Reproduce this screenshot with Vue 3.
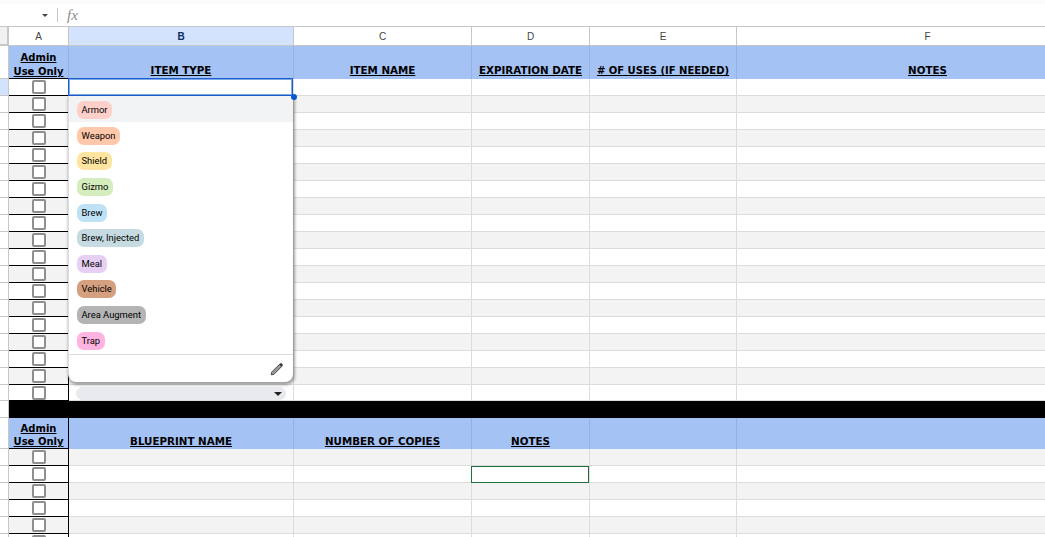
<script setup>
const topRows = Array.from({ length: 19 }, (_, i) => i)
const bottomRows = Array.from({ length: 6 }, (_, i) => i)
const letters = ['A', 'B', 'C', 'D', 'E', 'F']
const heads1 = ['ITEM TYPE', 'ITEM NAME', 'EXPIRATION DATE', '# OF USES (IF NEEDED)', 'NOTES']
const heads2 = ['BLUEPRINT NAME', 'NUMBER OF COPIES', 'NOTES', '', '']
const options = [
  { label: 'Armor', bg: '#ffcfc9' },
  { label: 'Weapon', bg: '#ffc8aa' },
  { label: 'Shield', bg: '#ffe5a0' },
  { label: 'Gizmo', bg: '#d4edbc' },
  { label: 'Brew', bg: '#bfe1f6' },
  { label: 'Brew, Injected', bg: '#c6dbe1' },
  { label: 'Meal', bg: '#e6cff2' },
  { label: 'Vehicle', bg: '#d4a07f' },
  { label: 'Area Augment', bg: '#b4b4b4' },
  { label: 'Trap', bg: '#ffb3e0' }
]
</script>

<template>
  <div class="app">
    <div class="topstrip"></div>
    <div class="formula">
      <span class="caret"></span>
      <span class="divider"></span>
      <span class="fx">fx</span>
    </div>
    <div class="sheet">
      <div class="grid colheads">
        <div class="corner"></div>
        <div
          v-for="l in letters"
          :key="l"
          class="colhead"
          :class="{ active: l === 'B' }"
        >{{ l }}</div>
      </div>

      <div class="grid head tall">
        <div class="rh"></div>
        <div class="hc admin"><span>Admin<br />Use Only</span></div>
        <div
          v-for="h in heads1"
          :key="h"
          class="hc"
          :class="{ tight: h.startsWith('#') }"
        ><span>{{ h }}</span></div>
      </div>

      <div
        v-for="r in topRows"
        :key="'t' + r"
        class="grid row"
        :class="{ alt: r % 2 === 1, last: r === 18 }"
      >
        <div class="rh" :class="{ on: r === 0 }"></div>
        <div class="c cbx"><span class="box"></span></div>
        <div class="c b">
          <span v-if="r === 0" class="sel blue"></span>
          <span v-if="r === 18" class="chip-empty"><i class="caret dark"></i></span>
        </div>
        <div class="c"></div>
        <div class="c"></div>
        <div class="c"></div>
        <div class="c"></div>
      </div>

      <div class="grid black">
        <div class="rh"></div>
        <div class="blackfill"></div>
      </div>

      <div class="grid head short">
        <div class="rh"></div>
        <div class="hc admin divided"><span>Admin<br />Use Only</span></div>
        <div v-for="(h, i) in heads2" :key="i" class="hc"><span>{{ h }}</span></div>
      </div>

      <div
        v-for="r in bottomRows"
        :key="'b' + r"
        class="grid row"
        :class="{ alt: r % 2 === 0 }"
      >
        <div class="rh"></div>
        <div class="c cbx"><span class="box"></span></div>
        <div class="c"></div>
        <div class="c"></div>
        <div class="c"><span v-if="r === 1" class="sel green"></span></div>
        <div class="c"></div>
        <div class="c"></div>
      </div>

      <span class="handle"></span>

      <div class="menu">
        <div class="list">
          <div
            v-for="(o, i) in options"
            :key="o.label"
            class="opt"
            :class="{ hover: i === 0 }"
          >
            <span class="pill" :style="{ background: o.bg }">{{ o.label }}</span>
          </div>
        </div>
        <div class="foot">
          <svg width="14" height="14" viewBox="0 0 14 14" class="pen">
            <path d="M1.6 10.2 L9.6 2.2 L11.8 4.4 L3.8 12.4 L1.2 12.8 Z" fill="#9a9a9a" stroke="#3c3c3c" stroke-width=".9" stroke-linejoin="round" />
            <path d="M9.2 2.6 L11.4 4.8 L12.7 3.5 C13 3.2 13 2.8 12.7 2.5 L11.5 1.3 C11.2 1 10.8 1 10.5 1.3 Z" fill="#3c3c3c" />
          </svg>
        </div>
      </div>
    </div>
  </div>
</template>

<style>
html, body { margin: 0; background: #fff; overflow: hidden; }
</style>

<style scoped>
.app {
  width: 1045px;
  height: 537px;
  overflow: hidden;
  background: #fff;
  font-family: "Liberation Sans", Arial, sans-serif;
}
.topstrip { height: 4px; background: #f9fbfd; }
.formula {
  height: 22px;
  display: flex;
  align-items: center;
  border-bottom: 1px solid #c7c7c7;
}
.caret {
  width: 0;
  height: 0;
  border-left: 3px solid transparent;
  border-right: 3px solid transparent;
  border-top: 3px solid #444;
  margin-left: 42px;
}
.divider { width: 1px; height: 14px; background: #c7c7c7; margin-left: 9px; }
.fx {
  font-family: "Liberation Serif", serif;
  font-style: italic;
  font-size: 15px;
  color: #8c8c8c;
  margin-left: 9px;
}
.sheet { position: relative; }
.grid {
  display: grid;
  grid-template-columns: 9px 60px 225px 178px 118px 147px 382px;
}
.colheads { height: 19px; }
.corner {
  background: #f1f1f1;
  border-right: 2px solid #c7c7c7;
  border-bottom: 2px solid #c7c7c7;
  box-sizing: border-box;
}
.colhead {
  box-sizing: border-box;
  border-right: 1px solid #c7c7c7;
  border-bottom: 1px solid #c7c7c7;
  display: flex;
  align-items: center;
  justify-content: center;
  font-size: 10px;
  color: #444;
}
.colhead.active { background: #d3e3fd; color: #0b2e66; font-weight: 700; }
.rh {
  box-sizing: border-box;
  border-right: 1px solid #c7c7c7;
  border-bottom: 1px solid #c7c7c7;
  background: #fff;
}
.rh.on { background: #d3e3fd; }
.head { background: #a4c2f4; }
.tall { height: 33px; }
.short { height: 31px; }
.hc {
  box-sizing: border-box;
  border-right: 1px solid #95b2e3;
  display: flex;
  align-items: flex-end;
  justify-content: center;
  text-align: center;
  font-family: "DejaVu Sans", sans-serif;
  font-weight: 700;
  font-size: 10.3px;
  line-height: 13px;
  color: #000;
  text-decoration: underline;
  padding-bottom: 2px;
  white-space: nowrap;
}
.short .hc { padding-bottom: 1px; }
.hc.tight { font-size: 10px; }
.admin, .short .admin {
  font-size: 10px;
  line-height: 14px;
  padding-bottom: 0;
  border-bottom: 1px solid #000;
}
.tall .admin {
  padding-bottom: 0;
  line-height: 14px;
  border-bottom: 0;
  box-shadow: inset 0 -1px 0 #000;
}
.admin.divided { border-right: 1px solid #000; line-height: 13px; }
.row { height: 17px; background: #fff; }
.row.last { height: 16px; }
.row.alt { background: #f3f3f3; }
.c {
  box-sizing: border-box;
  border-right: 1px solid #dcdcdc;
  border-bottom: 1px solid #dcdcdc;
  position: relative;
}
.cbx {
  border-bottom-color: #000;
  border-right-color: #000;
  display: flex;
  align-items: center;
  justify-content: center;
}
.box {
  width: 10px;
  height: 10px;
  border: 2px solid #8f8f8f;
  border-radius: 2px;
  background: #fff;
}
.sel {
  position: absolute;
  left: -1px;
  background: #fff;
  box-sizing: border-box;
}
.sel.blue {
  top: -1px;
  right: 0;
  bottom: -1px;
  z-index: 1;
  border: 1px solid #1a5fd0;
  box-shadow: inset 0 0 0 1px rgba(26, 95, 208, .55);
}
.sel.green { top: 0; right: 0; bottom: -1px; border: 1px solid #1e6f3c; }
.chip-empty {
  position: absolute;
  left: 7px;
  right: 7px;
  top: 2px;
  height: 13px;
  background: #e9eaed;
  border-radius: 7px;
  display: block;
}
.caret.dark {
  position: absolute;
  right: 4px;
  top: 5px;
  margin: 0;
  border-left-width: 4px;
  border-right-width: 4px;
  border-top: 4px solid #222;
}
.black { height: 17px; }
.blackfill { background: #000; grid-column: 2 / -1; }
.handle {
  position: absolute;
  left: 291px;
  top: 67px;
  width: 6px;
  height: 6px;
  background: #0b57d0;
  border-radius: 50%;
  z-index: 3;
}
.menu {
  position: absolute;
  left: 68px;
  top: 69px;
  width: 225px;
  height: 286px;
  box-sizing: border-box;
  background: #fff;
  border-left: 1px solid #dadce0;
  border-radius: 0 0 8px 8px;
  box-shadow: 1px 2px 3px 1px rgba(40, 40, 40, .4);
  z-index: 2;
  display: flex;
  flex-direction: column;
}
.list { height: 258px; border-bottom: 1px solid #dadce0; }
.opt {
  height: 25.6px;
  display: flex;
  align-items: center;
  padding-left: 8px;
}
.opt.hover {
  height: 26px;
  margin-bottom: 1px;
  padding-top: 2px;
  box-sizing: border-box;
  background: #f1f3f4;
}
.pill {
  height: 18px;
  line-height: 18px;
  padding: 0 4.5px;
  border-radius: 7px;
  font-family: "Roboto", "Liberation Sans", sans-serif;
  font-size: 9.4px;
  color: #000;
  white-space: nowrap;
}
.foot {
  flex: 1;
  display: flex;
  align-items: center;
  justify-content: flex-end;
  padding-right: 9px;
}
</style>
